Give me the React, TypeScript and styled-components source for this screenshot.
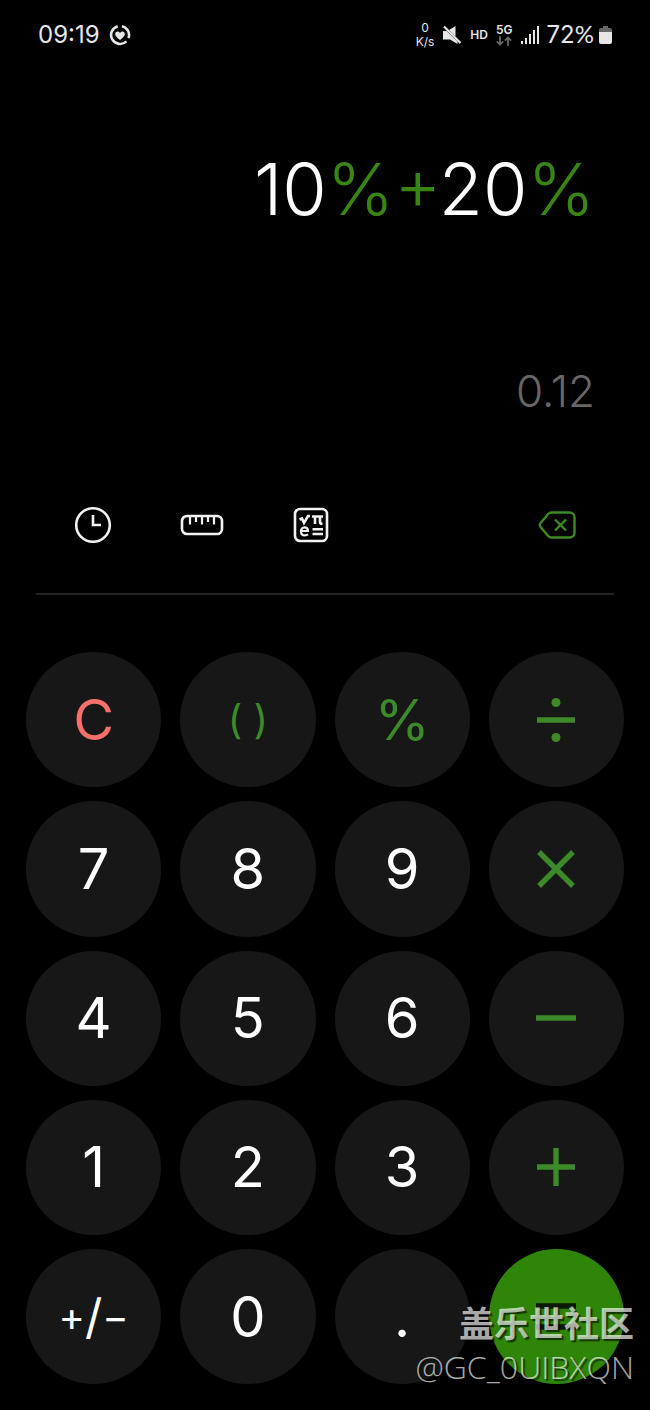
import React from 'react';
import styled, { createGlobalStyle } from 'styled-components';

const GlobalStyle = createGlobalStyle`
  *, *::before, *::after { box-sizing: border-box; }
  body {
    margin: 0;
    background: #000;
    color: #fff;
    font-family: Inter, 'Noto Sans', sans-serif;
  }
  button {
    padding: 0;
    border: 0;
    background: none;
    color: inherit;
    font: inherit;
    cursor: pointer;
  }
  svg { display: block; }
`;

const Screen = styled.main`
  position: relative;
  background: #000;
  overflow: hidden;
`;

const StatusBar = styled.header`
  display: flex;
  justify-content: space-between;
  align-items: center;
  height: 70px;
  padding: 0 38px;
  color: #e6e6e6;
`;

const StatusGroup = styled.div<{ $gap: number }>`
  display: flex;
  align-items: center;
  gap: ${p => p.$gap}px;
`;

const StatusText = styled.span`
  font-size: 24px;
  line-height: 32px;
`;

const Speed = styled.span`
  display: flex;
  flex-direction: column;
  align-items: center;
  font-size: 12px;
  line-height: 14px;
`;

const Tag = styled.span`
  font-size: 12px;
  font-weight: 600;
  line-height: 12px;
`;

const Network = styled.span`
  display: flex;
  flex-direction: column;
  align-items: center;
`;

const Percent = styled.span`
  font-family: Lato, 'Noto Sans', sans-serif;
  line-height: 1;
`;

const Display = styled.section`
  display: flex;
  flex-direction: column;
  align-items: flex-end;
  gap: 130px;
  padding: 75px 55px 0;
`;

const Expression = styled.div`
  font-size: 72px;
  font-weight: 300;
  line-height: 88px;
`;

const Operator = styled.span`
  color: #378614;
`;

const Result = styled.output`
  font-size: 44px;
  font-weight: 300;
  line-height: 56px;
  color: #666;
`;

const Toolbar = styled.nav`
  display: flex;
  justify-content: space-between;
  margin: 82px 36px 0;
  padding: 0 33px 44px;
  border-bottom: 2px solid #242424;
`;

const ToolGroup = styled.div`
  display: flex;
  gap: 61px;
`;

const ToolButton = styled.button<{ $color?: string }>`
  display: grid;
  place-items: center;
  width: 48px;
  height: 48px;
  color: ${p => p.$color ?? '#f2f2f2'};
`;

const Keypad = styled.section`
  display: grid;
  grid-template-columns: repeat(4, 1fr);
  gap: 14px 19px;
  padding: 57px 26px 26px;
`;

type Tone = 'digit' | 'operator' | 'clear' | 'equals';

const toneColor: Record<Tone, string> = {
  digit: '#fff',
  operator: '#3c8a2a',
  clear: '#f4706b',
  equals: '#0a1a04',
};

const Key = styled.button<{ $tone: Tone }>`
  display: flex;
  justify-content: center;
  align-items: center;
  aspect-ratio: 1;
  border-radius: 50%;
  background: ${p => (p.$tone === 'equals' ? '#2f8508' : '#171717')};
  color: ${p => toneColor[p.$tone]};
  font-size: 56px;
  line-height: 64px;
`;

const SmallLabel = styled.span`
  font-size: 40px;
  line-height: 48px;
`;

const SignLabel = styled.span`
  display: flex;
  align-items: center;
  font-size: 40px;
  line-height: 48px;
`;

const Slash = styled.span`
  font-size: 48px;
`;

const Watermark = styled.div`
  position: absolute;
  right: 16px;
  bottom: 22px;
  display: flex;
  flex-direction: column;
  align-items: flex-end;
  color: rgba(255, 255, 255, 0.66);
  text-shadow: 2px 2px 1px rgba(0, 0, 0, 0.6);
  pointer-events: none;
`;

const Community = styled.span`
  font-family: 'Noto Sans CJK SC', sans-serif;
  font-size: 35px;
  font-weight: 700;
  line-height: 48px;
`;

const Account = styled.span`
  font-family: 'Open Sans', 'Noto Sans', sans-serif;
  font-size: 32px;
  font-weight: 300;
  line-height: 42px;
`;

const HeartRing = () => (
  <svg width="22" height="22" viewBox="0 0 22 22" fill="none" aria-hidden="true">
    <path d="M12.900 2.200A9 9 0 0 1 19.500 14.100M17.400 17.400A9 9 0 1 1 8.700 2.300" stroke="currentColor" strokeWidth="2.600" />
    <path d="M11 16C7.400 13.200 6.200 11.800 6.200 10a2.500 2.500 0 0 1 4.800-1 2.500 2.500 0 0 1 4.800 1c0 1.800-1.200 3.200-4.800 6z" fill="currentColor" />
  </svg>
);

const MuteIcon = () => (
  <svg width="20" height="20" viewBox="0 0 20 20" aria-hidden="true">
    <path d="M1 6h3.500L15.500 16.500V19L8 14.500H1zM7 5 13.500 1v10.500z" fill="currentColor" />
    <path d="m2 1.500 16.500 16.500" stroke="currentColor" strokeWidth="2.200" />
  </svg>
);

const DataArrows = () => (
  <svg width="16" height="10" viewBox="0 0 16 10" fill="none" stroke="#666" strokeWidth="1.800" aria-hidden="true">
    <path d="M4 0v8.500M.8 5.400 4 8.600l3.200-3.200M12 10V1.500M8.800 4.600 12 1.400l3.200 3.200" />
  </svg>
);

const SignalIcon = () => (
  <svg width="18" height="18" viewBox="0 0 18 18" fill="currentColor" aria-hidden="true">
    <path d="M0 15h2v3H0zM4 12h2v6H4zM8 8h2v10H8zM12 4h2v14h-2zM16 0h2v18h-2z" />
  </svg>
);

const BatteryIcon = () => (
  <svg width="13" height="18" viewBox="0 0 13 18" aria-hidden="true">
    <path d="M4 0h5v2h2a2 2 0 0 1 2 2v3H0V4a2 2 0 0 1 2-2h2z" fill="#666" />
    <path d="M0 6h13v10a2 2 0 0 1-2 2H2a2 2 0 0 1-2-2z" fill="currentColor" />
  </svg>
);

const ClockIcon = () => (
  <svg width="38" height="38" viewBox="0 0 38 38" fill="none" stroke="currentColor" strokeWidth="2.600" aria-hidden="true">
    <circle cx="19" cy="19" r="16.800" />
    <path d="M19 9v10h8" />
  </svg>
);

const RulerIcon = () => (
  <svg width="44" height="22" viewBox="0 0 44 22" fill="none" stroke="currentColor" strokeWidth="2.600" aria-hidden="true">
    <rect x="2" y="2" width="40" height="18" rx="5" />
    <path d="M10 2v8.500M16 2v6M22 2v8.500M28 2v6M34 2v8.500" strokeWidth="2.200" />
  </svg>
);

const ScientificIcon = () => (
  <svg width="36" height="36" viewBox="0 0 36 36" fill="none" stroke="currentColor" strokeWidth="2.600" aria-hidden="true">
    <rect x="2" y="2" width="32" height="32" rx="5" />
    <path d="M6.500 12.500 9 11.500l2 4.500 4-7h2M19 9.500h11M22 9.500V17M27 9.500v6q0 1.500 2.500 1M19.500 22.200h10.500M19.500 27h10.500" />
    <path d="M8 24h7c0-2.200-1.300-3.600-3.400-3.600S8 22.200 8 24.400s1.600 3.900 4 3.900c1.200 0 2-.2 3-.9" strokeWidth="2.200" />
  </svg>
);

const BackspaceIcon = () => (
  <svg width="38" height="30" viewBox="0 0 38 30" fill="none" stroke="currentColor" strokeWidth="2.400" aria-hidden="true">
    <path d="M13.500 2.500h18a5 5 0 0 1 5 5v15a5 5 0 0 1-5 5h-18q-2 0-3.300-1.500L2.800 17.300q-2-2.300 0-4.600L10.200 4q1.300-1.500 3.300-1.500z" />
    <path d="m17 9.500 11 11m0-11-11 11" />
  </svg>
);

const opPaths = {
  divide: 'M1 22h38',
  multiply: 'm4 5 34 34M38 5 4 39',
  minus: 'M0 22h40',
  plus: 'M1 22h38M20 3v38',
  equals: 'M0 11h40M0 32h40',
};

const OpIcon = ({ name }: { name: keyof typeof opPaths }) => (
  <svg
    width={name === 'multiply' ? 42 : 40}
    height="44"
    viewBox={name === 'multiply' ? '0 0 42 44' : '0 0 40 44'}
    fill="none"
    stroke="currentColor"
    strokeWidth="5.400"
    aria-hidden="true"
  >
    <path d={opPaths[name]} />
    {name === 'divide' && (
      <g fill="currentColor" stroke="none">
        <circle cx="20" cy="4.500" r="4.500" />
        <circle cx="20" cy="39.500" r="4.500" />
      </g>
    )}
  </svg>
);

type KeyDef = { name: string; tone: Tone; face: React.ReactNode };

const digit = (d: string): KeyDef => ({ name: d, tone: 'digit', face: d });
const op = (name: keyof typeof opPaths, tone: Tone = 'operator'): KeyDef => ({
  name,
  tone,
  face: <OpIcon name={name} />,
});

const keys: KeyDef[] = [
  { name: 'clear', tone: 'clear', face: 'C' },
  { name: 'parentheses', tone: 'operator', face: <SmallLabel>( )</SmallLabel> },
  { name: 'percent', tone: 'operator', face: '%' },
  op('divide'),
  digit('7'), digit('8'), digit('9'), op('multiply'),
  digit('4'), digit('5'), digit('6'), op('minus'),
  digit('1'), digit('2'), digit('3'), op('plus'),
  {
    name: 'toggle sign',
    tone: 'digit',
    face: <SignLabel>+<Slash>/</Slash>−</SignLabel>,
  },
  digit('0'),
  { name: 'decimal point', tone: 'digit', face: '.' },
  op('equals', 'equals'),
];

export default function App() {
  return (
    <>
      <GlobalStyle />
      <Screen>
        <StatusBar>
          <StatusGroup $gap={9}>
            <StatusText>09:19</StatusText>
            <HeartRing />
          </StatusGroup>
          <StatusGroup $gap={8}>
            <Speed><span>0</span><span>K/s</span></Speed>
            <MuteIcon />
            <Tag>HD</Tag>
            <Network><Tag>5G</Tag><DataArrows /></Network>
            <SignalIcon />
            <StatusGroup $gap={5}>
              <StatusText>72<Percent>%</Percent></StatusText>
              <BatteryIcon />
            </StatusGroup>
          </StatusGroup>
        </StatusBar>
        <Display>
          <Expression>
            10<Operator>%+</Operator>20<Operator>%</Operator>
          </Expression>
          <Result>0.12</Result>
        </Display>
        <Toolbar>
          <ToolGroup>
            <ToolButton aria-label="History"><ClockIcon /></ToolButton>
            <ToolButton aria-label="Unit converter"><RulerIcon /></ToolButton>
            <ToolButton aria-label="Scientific mode"><ScientificIcon /></ToolButton>
          </ToolGroup>
          <ToolButton aria-label="Backspace" $color="#3c8a20"><BackspaceIcon /></ToolButton>
        </Toolbar>
        <Keypad>
          {keys.map(k => (
            <Key key={k.name} $tone={k.tone} aria-label={k.name}>{k.face}</Key>
          ))}
        </Keypad>
        <Watermark>
          <Community>盖乐世社区</Community>
          <Account>@GC_0UIBXQN</Account>
        </Watermark>
      </Screen>
    </>
  );
}
